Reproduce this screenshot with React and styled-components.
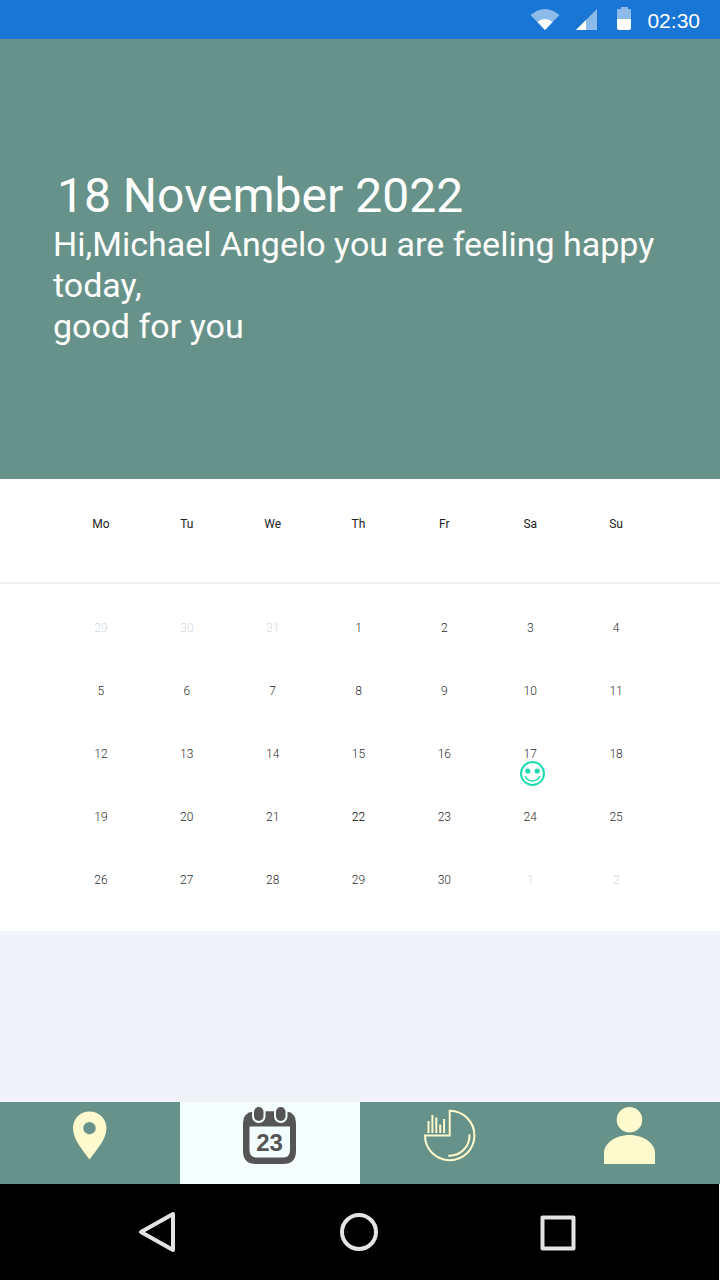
import React from 'react';
import styled, { createGlobalStyle, css } from 'styled-components';

const sage = '#679289';
const cream = '#fffacd';
const mist = '#f0f4f8';

const GlobalStyle = createGlobalStyle`
  * { box-sizing: border-box; }
  body { margin: 0; background: #fff; font-family: Roboto, sans-serif; }
`;

const Page = styled.div`
  display: flex;
  flex-direction: column;
  min-height: 100vh;
  background: ${mist};
`;

const StatusBar = styled.header`
  display: flex;
  align-items: center;
  justify-content: flex-end;
  height: 39px;
  padding: 0 20px 2px;
  background: #1976d5;
  color: #fff;
`;

const StatusIcons = styled.svg`
  display: block;
  margin-right: 15px;
`;

const Clock = styled.time`
  font: 21px/24px 'Liberation Sans', sans-serif;
  padding-top: 4px;
`;

const Hero = styled.section`
  display: flex;
  flex-direction: column;
  justify-content: center;
  min-height: 440px;
  padding: 0 53px 4px;
  background: ${sage};
  color: #fff;
`;

const Title = styled.h1`
  margin: 0;
  padding-left: 4px;
  font-size: 48px;
  font-weight: 400;
  line-height: 56px;
`;

const Greeting = styled.p`
  margin: 0;
  font-size: 34px;
  line-height: 41px;
`;

const Calendar = styled.table`
  display: block;
  background: #fff;
  font-size: 12px;
  line-height: 16px;
`;

const CalendarHead = styled.thead`
  display: block;
  padding: 37px 61px 50px 58px;
  border-bottom: 2px solid ${mist};
`;

const CalendarBody = styled.tbody`
  display: grid;
  row-gap: 47px;
  padding: 36px 61px 43px 58px;
`;

const Week = styled.tr`
  display: grid;
  grid-template-columns: repeat(7, 1fr);
`;

const Weekday = styled.th`
  padding: 0;
  color: #222;
  font-weight: 400;
  text-align: center;
`;

const Day = styled.td`
  position: relative;
  padding: 0;
  color: #2d2d2d;
  font-weight: 300;
  text-align: center;
  ${({ $outside }) => $outside && css`color: #d3dbe3;`}
  ${({ $today }) => $today && css`color: #000;`}
`;

const Mood = styled.svg`
  position: absolute;
  top: 15px;
  left: calc(50% - 10px);
`;

const TabBar = styled.nav`
  display: grid;
  grid-template-columns: repeat(4, 1fr);
  margin-top: auto;
  background: ${sage};
`;

const Tab = styled.button`
  display: flex;
  align-items: flex-start;
  justify-content: center;
  height: 82px;
  padding: 4px 0 0;
  border: 0;
  background: ${({ $active }) => ($active ? '#f4fefe' : 'transparent')};
  color: ${({ $active }) => ($active ? '#555' : cream)};
`;

const SystemBar = styled.footer`
  display: flex;
  align-items: center;
  justify-content: space-between;
  height: 96px;
  margin-right: 1px;
  padding: 0 140px 0 138px;
  background: #000;
`;

const SystemButton = styled.button`
  display: flex;
  padding: 0;
  border: 0;
  background: none;
  color: #e4e4e4;
`;

const weekdays = ['Mo', 'Tu', 'We', 'Th', 'Fr', 'Sa', 'Su'];

const weeks = [
  [29, 30, 31, 1, 2, 3, 4],
  [5, 6, 7, 8, 9, 10, 11],
  [12, 13, 14, 15, 16, 17, 18],
  [19, 20, 21, 22, 23, 24, 25],
  [26, 27, 28, 29, 30, 1, 2],
];

const isOutside = (day, week) => (week === 0 && day > 7) || (week === 4 && day < 8);

function HappyFace() {
  return (
    <Mood width="25" height="25" viewBox="0 0 25 25" role="img" aria-label="Happy">
      <circle cx="12.5" cy="12.5" r="11.5" fill="#fff" stroke="#1ddbb0" strokeWidth="2" />
      <circle cx="7.8" cy="10" r="2.6" fill="#1ddbb0" />
      <circle cx="17.2" cy="10" r="2.6" fill="#1ddbb0" />
      <path d="M5 15C8 21.500 17 21.500 20 15" fill="none" stroke="#1ddbb0" strokeWidth="1.5" />
    </Mood>
  );
}

function PinIcon() {
  return (
    <svg width="60" height="60" viewBox="0 0 60 60" fill="currentColor" aria-hidden="true">
      <path fillRule="evenodd" d="M29.5 5.500C20 5.500 13 12.800 13 22c0 11.500 10 22.500 16.500 31.500C36 44.500 46.500 33.500 46.500 22c0-9.200-7.500-16.500-17-16.500Zm0 10.500a6.200 6.200 0 1 1 0 12.400a6.200 6.200 0 0 1 0-12.400Z" />
    </svg>
  );
}

function CalendarIcon() {
  return (
    <svg width="60" height="60" viewBox="0 0 60 60" fill="none" aria-hidden="true">
      <path fill="currentColor" d="M14 5.200h32Q56 6.500 56 17v28q0 13-13 13H16Q3 58 3 45V17Q3 6.500 14 5.200Z" />
      <path fill="#f4fefe" d="M9.500 20.500H50V44q0 7.500-7 7.500H16.500q-7 0-7-7.500Z" />
      <rect x="12" y="-2" width="13.500" height="19" rx="6.500" fill="#f4fefe" />
      <rect x="34" y="-2" width="13.500" height="19" rx="6.500" fill="#f4fefe" />
      <rect x="14" y="1" width="9.500" height="14" rx="4.700" fill="currentColor" />
      <rect x="36" y="1" width="9.500" height="14" rx="4.700" fill="currentColor" />
      <text x="29.500" y="45" textAnchor="middle" fill="currentColor" fontFamily="'Liberation Sans', sans-serif" fontWeight="700" fontSize="24">23</text>
    </svg>
  );
}

function ChartIcon() {
  return (
    <svg width="60" height="60" viewBox="0 0 60 60" fill="none" stroke="currentColor" strokeWidth="2" aria-hidden="true">
      <path d="M29.700 4.800A24.700 24.700 0 1 1 5 29.500h24.700Z" />
      <path d="M49.500 29A20 20 0 0 1 29 49.700" strokeLinecap="round" />
      <path d="M8.500 15v12M12.400 9v18M16.300 11.500V27M20.200 18.500V27M24.100 13v14" />
    </svg>
  );
}

function PersonIcon() {
  return (
    <svg width="60" height="60" viewBox="0 0 60 60" fill="currentColor" aria-hidden="true">
      <circle cx="29.500" cy="13.800" r="12.800" />
      <path d="M4 58V46.500C4 38 15 29 29.500 29S55 38 55 46.500V58Z" />
    </svg>
  );
}

const tabs = [
  { label: 'Places', Icon: PinIcon },
  { label: 'Calendar', Icon: CalendarIcon, active: true },
  { label: 'Statistics', Icon: ChartIcon },
  { label: 'Profile', Icon: PersonIcon },
];

export default function App() {
  return (
    <>
      <GlobalStyle />
      <Page>
        <StatusBar>
          <StatusIcons width="102" height="26" viewBox="0 -2 102 26" fill="#fff" aria-hidden="true">
            <path opacity=".5" d="M.5 7Q15-5 29.500 7L15 22Z" />
            <path d="M7.500 14Q15 8 22.500 14L15 22Z" />
            <path opacity=".5" d="M67 1v21H46Z" />
            <path d="M56 12v10H46Z" />
            <path opacity=".5" d="M87 11V2q0-1 1-1h3V-1h7v2h2q1 0 1 1v9Z" />
            <path d="M87 11h14v9q0 2-2 2H89q-2 0-2-2Z" />
          </StatusIcons>
          <Clock>02:30</Clock>
        </StatusBar>

        <Hero>
          <Title>18 November 2022</Title>
          <Greeting>
            Hi,Michael Angelo you are feeling happy today,
            <br />
            good for you
          </Greeting>
        </Hero>

        <Calendar>
          <CalendarHead>
            <Week>
              {weekdays.map((name) => (
                <Weekday key={name} scope="col">{name}</Weekday>
              ))}
            </Week>
          </CalendarHead>
          <CalendarBody>
            {weeks.map((days, week) => (
              <Week key={week}>
                {days.map((day) => (
                  <Day key={day} $outside={isOutside(day, week)} $today={day === 22}>
                    {day}
                    {day === 17 && <HappyFace />}
                  </Day>
                ))}
              </Week>
            ))}
          </CalendarBody>
        </Calendar>

        <TabBar>
          {tabs.map(({ label, Icon, active }) => (
            <Tab key={label} type="button" aria-label={label} $active={active}>
              <Icon />
            </Tab>
          ))}
        </TabBar>

        <SystemBar>
          <SystemButton type="button" aria-label="Back">
            <svg width="40" height="42" viewBox="0 0 40 42" fill="none" stroke="currentColor" strokeWidth="4" strokeLinejoin="round">
              <path d="M35 3v36L3 21Z" />
            </svg>
          </SystemButton>
          <SystemButton type="button" aria-label="Home">
            <svg width="40" height="40" viewBox="0 0 40 40" fill="none" stroke="currentColor" strokeWidth="4">
              <circle cx="20" cy="20" r="17" />
            </svg>
          </SystemButton>
          <SystemButton type="button" aria-label="Recent apps">
            <svg width="40" height="40" viewBox="0 0 40 40" fill="none" stroke="currentColor" strokeWidth="4" strokeLinejoin="round">
              <path d="M3.500 5.500h31v31h-31Z" />
            </svg>
          </SystemButton>
        </SystemBar>
      </Page>
    </>
  );
}
